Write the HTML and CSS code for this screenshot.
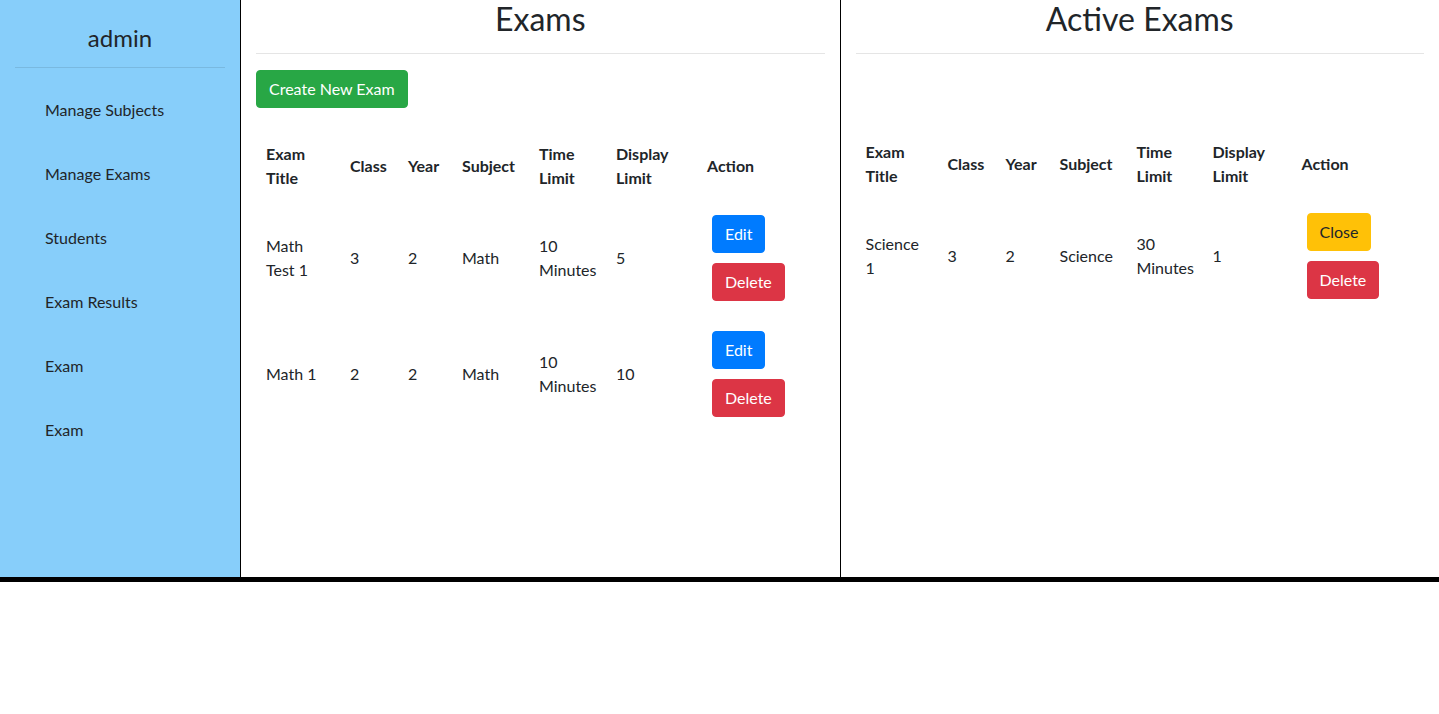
FILE: index.html
```html
<!DOCTYPE html>
<html lang="en">
<head>
<meta charset="utf-8">
<title>Exams</title>
<link rel="stylesheet" href="styles.css">
</head>
<body>
<div class="layout">
  <aside class="sidebar">
    <div class="brand">admin</div>
    <hr class="rule rule-side">
    <nav class="nav">
      <a class="nav-link" href="#">Manage Subjects</a>
      <a class="nav-link" href="#">Manage Exams</a>
      <a class="nav-link" href="#">Students</a>
      <a class="nav-link" href="#">Exam Results</a>
      <a class="nav-link" href="#">Exam</a>
      <a class="nav-link" href="#">Exam</a>
    </nav>
  </aside>

  <section class="panel panel-left">
    <h2 class="panel-title">Exams</h2>
    <hr class="rule">
    <div class="toolbar">
      <button class="btn btn-success">Create New Exam</button>
    </div>
    <table class="table">
      <colgroup>
        <col class="c-title"><col class="c-class"><col class="c-year"><col class="c-subject"><col class="c-time"><col class="c-display"><col>
      </colgroup>
      <thead>
        <tr><th>Exam Title</th><th>Class</th><th>Year</th><th>Subject</th><th>Time Limit</th><th>Display Limit</th><th>Action</th></tr>
      </thead>
      <tbody>
        <tr>
          <td>Math Test 1</td><td>3</td><td>2</td><td>Math</td><td>10 Minutes</td><td>5</td>
          <td><div class="actions"><button class="btn btn-primary">Edit</button><button class="btn btn-danger">Delete</button></div></td>
        </tr>
        <tr>
          <td>Math 1</td><td>2</td><td>2</td><td>Math</td><td>10 Minutes</td><td>10</td>
          <td><div class="actions"><button class="btn btn-primary">Edit</button><button class="btn btn-danger">Delete</button></div></td>
        </tr>
      </tbody>
    </table>
  </section>

  <section class="panel panel-right">
    <h2 class="panel-title">Active Exams</h2>
    <hr class="rule">
    <div class="toolbar toolbar-empty"></div>
    <table class="table">
      <colgroup>
        <col class="c-title2"><col class="c-class"><col class="c-year"><col class="c-subject"><col class="c-time2"><col class="c-display2"><col>
      </colgroup>
      <thead>
        <tr><th>Exam Title</th><th>Class</th><th>Year</th><th>Subject</th><th>Time Limit</th><th>Display Limit</th><th>Action</th></tr>
      </thead>
      <tbody>
        <tr>
          <td>Science 1</td><td>3</td><td>2</td><td>Science</td><td>30 Minutes</td><td>1</td>
          <td><div class="actions"><button class="btn btn-warning">Close</button><button class="btn btn-danger">Delete</button></div></td>
        </tr>
      </tbody>
    </table>
  </section>
</div>
</body>
</html>
```

FILE: styles.css
```css
* { box-sizing: border-box; }

html, body {
  margin: 0;
  padding: 0;
  background: #fff;
}

body {
  font-family: "Lato", "Open Sans", "Liberation Sans", sans-serif;
  font-size: 16px;
  line-height: 1.5;
  color: #212529;
}

.layout {
  display: flex;
  height: 582px;
  border-bottom: 5px solid #000;
}

.sidebar {
  width: 241px;
  flex: none;
  background: #87cefa;
  border-right: 1px solid #000;
  padding: 0 15px;
}

.brand {
  text-align: center;
  font-size: 24px;
  line-height: 29px;
  padding-top: 23px;
}

.rule {
  border: 0;
  border-top: 1px solid rgba(0, 0, 0, 0.1);
  margin: 15px 0 16px;
  height: 0;
}

.rule-side {
  margin: 15px 0 10px;
}

.nav {
  display: flex;
  flex-direction: column;
}

.nav-link {
  display: block;
  padding: 20px 30px;
  color: #212529;
  text-decoration: none;
  line-height: 24px;
}

.panel {
  flex: 1 1 0;
  min-width: 0;
  padding: 0 15px;
}

.panel-left {
  border-right: 1px solid #000;
}

.panel-title {
  margin: 0;
  font-size: 32px;
  font-weight: 400;
  line-height: 38px;
  text-align: center;
}

.toolbar {
  height: 38px;
  margin-bottom: 24px;
}

.toolbar-empty {
  height: 36px;
}

.btn {
  display: inline-block;
  font-family: inherit;
  font-size: 16px;
  line-height: 24px;
  padding: 6px 12px;
  border: 1px solid transparent;
  border-radius: 4px;
  color: #fff;
  cursor: pointer;
}

.btn-success { background: #28a745; border-color: #28a745; }
.btn-primary { background: #007bff; border-color: #007bff; }
.btn-danger { background: #dc3545; border-color: #dc3545; }
.btn-warning { background: #ffc107; border-color: #ffc107; color: #212529; }

.table {
  width: 100%;
  border-collapse: collapse;
  table-layout: fixed;
}

.table th,
.table td {
  padding: 10px;
  text-align: left;
  vertical-align: middle;
  line-height: 24px;
}

.table th { font-weight: 700; }

.actions {
  display: flex;
  flex-direction: column;
  align-items: flex-start;
}

.actions .btn {
  margin: 5px;
}

.c-title { width: 84px; }
.c-title2 { width: 82px; }
.c-class { width: 58px; }
.c-year { width: 54px; }
.c-subject { width: 77px; }
.c-time { width: 77px; }
.c-time2 { width: 76px; }
.c-display { width: 91px; }
.c-display2 { width: 89px; }
```
